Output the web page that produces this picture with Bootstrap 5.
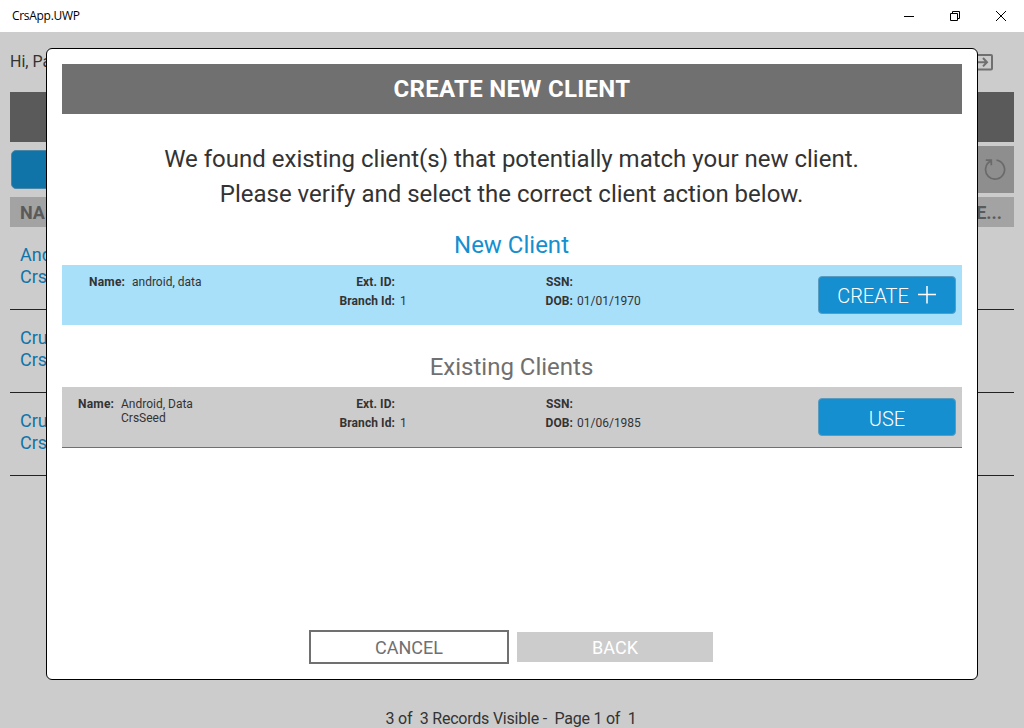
<!DOCTYPE html>
<html lang="en">
<head>
<meta charset="utf-8">
<title>CrsApp.UWP</title>
<link href="https://cdn.jsdelivr.net/npm/bootstrap@5.3.0/dist/css/bootstrap.min.css" rel="stylesheet">
<style>
body{font-family:Roboto,sans-serif;color:#333;background:#ccc;width:1024px;height:728px;overflow:hidden}
.titlebar{height:32px;font:12px/32px "Open Sans","Noto Sans",sans-serif;color:#000;padding-left:12px}
.titlebar span{letter-spacing:-.3px}
.caption-btn{width:46px;height:32px}
.app-page{height:696px;padding:0 10px}
.greeting{height:60px;font-size:16px;line-height:60px}
.signout{margin-right:21px}
.page-head{height:50px;background:#5a5a5a}
.toolbar-row{height:47px;margin:4px 0}
.add-btn{width:300px;height:39px;margin-left:1px;background:#1174a9;border:1px solid #4a86a8;border-radius:5px;margin-bottom:1px}
.refresh-btn{width:47px;background:#8e8e8e;padding:0 8px 1px 0}
.list-head{height:30px;background:#a3a3a3;color:#5a5a5a;font-size:18px;font-weight:700;line-height:31px;padding:0 12px 0 10px}
.list-row{height:83px;border-bottom:1px solid #222;color:#1174a9;font-size:18px;line-height:22px;padding:17px 10px 0}
.page-status{font-size:16px;line-height:18px;letter-spacing:-.22px;white-space:pre;padding-right:2px}
.dialog-box{left:46px;top:48px;width:932px;height:632px;background:#fff;border:1px solid #000;border-radius:6px;padding:15px}
.dialog-title{height:50px;background:#707070;font-size:24px;font-weight:700;line-height:50px;letter-spacing:.3px;margin:0}
.intro{font-size:24px;line-height:35px;margin:28px 1px 0 0}
.sect{font-size:24px;font-weight:400;line-height:34px;margin:0;padding:0 1px 3px 0}
.new-title{color:#158fd0;margin-top:16px}
.old-title{color:#707070;margin-top:25px}
.client-row{display:grid;grid-template-columns:272px 61px 140px 38px 245px 138px;height:60px;font-size:12px;line-height:19px;padding:8px 0 0}
.client-row b{font-weight:700;letter-spacing:.08px}
.who{line-height:14px;padding-top:2px}
.who b{width:36px;letter-spacing:.2px}
.new-row .who{padding-left:27px}
.old-row .who{padding-left:16px}
.who span{padding-left:7px}
.fval{padding-left:5px}
.dob{padding-left:4px}
.act{height:38px;margin-top:3px;background:#158fd0;border:1px solid #5a9cc0;border-radius:4px;font-size:20px;font-weight:300;line-height:38px;padding:1px 0 0;color:#fff}
.new-row{background:#a8dff9}
.old-row{background:#ccc;border-bottom:1px solid #707070;height:61px}
.foot-btn{border-radius:0;padding:0;font-size:18px}
.cancel{width:200px;height:34px;border:2px solid #707070;color:#707070}
.back{width:196px;height:30px;background:#ccc;color:#fff;border:0}
.foot-row{padding-right:2px}
</style>
</head>
<body class="position-relative">
<header class="titlebar bg-white d-flex justify-content-between">
  <span>CrsApp.UWP</span>
  <div class="d-flex">
    <svg class="caption-btn" viewBox="0 0 46 32"><path d="M18 16.5h10" stroke="#000"/></svg>
    <svg class="caption-btn" viewBox="0 0 46 32" fill="none" stroke="#000"><path d="M18.5 13.5h7v7h-7zM20.5 13.500v-2h7v7h-2"/></svg>
    <svg class="caption-btn" viewBox="0 0 46 32"><path d="M18 11l10 10M28 11L18 21" stroke="#000"/></svg>
  </div>
</header>
<main class="app-page d-flex flex-column">
  <div class="greeting d-flex justify-content-between align-items-center">
    <span>Hi, Pa</span>
    <svg class="signout" width="20" height="18" viewBox="0 0 20 18" fill="none" stroke="#707070" stroke-width="2"><path d="M1 5V2h17q1 0 1 1v12.500q0 1-1 1H1v-3M0 9.200h14M10 5l4 4.200-4 4.200"/></svg>
  </div>
  <div class="page-head"></div>
  <div class="toolbar-row d-flex justify-content-between">
    <div class="add-btn align-self-center"></div>
    <div class="refresh-btn d-flex align-items-center justify-content-end">
      <svg width="23" height="23" viewBox="0 0 23 23" fill="none" stroke="#6a6a6a" stroke-width="1.700"><path d="M13.500 2.200A9.500 9.500 0 1 1 7.800 3.100M2.800 2.200h5.500v5"/></svg>
    </div>
  </div>
  <div class="list-head d-flex justify-content-between"><span>NA</span><span>E...</span></div>
  <div class="list-row">And<br>Crs</div>
  <div class="list-row">Cru<br>Crs</div>
  <div class="list-row">Cru<br>Crs</div>
  <div class="page-status mt-auto text-center">3 of  3 Records Visible -  Page 1 of  1</div>
</main>

<section class="dialog-box position-absolute d-flex flex-column" role="dialog">
  <h1 class="dialog-title text-white text-center">CREATE NEW CLIENT</h1>
  <p class="intro text-center">We found existing client(s) that potentially match your new client.<br>Please verify and select the correct client action below.</p>
  <h2 class="sect new-title text-center">New Client</h2>
  <div class="client-row new-row">
    <div class="who d-flex"><b>Name:</b><span>android, data</span></div>
    <div class="text-end"><b>Ext. ID:</b><br><b>Branch Id:</b></div>
    <div class="fval"><br>1</div>
    <div class="text-end"><b>SSN:</b><br><b>DOB:</b></div>
    <div class="dob"><br>01/01/1970</div>
    <button class="btn act d-flex align-items-center justify-content-center gap-2">CREATE
      <svg width="20" height="20" viewBox="0 0 20 20" stroke="#fff" stroke-width="1.500"><path d="M1 8.500h18M10-.5v18"/></svg></button>
  </div>
  <h2 class="sect old-title text-center">Existing Clients</h2>
  <div class="client-row old-row">
    <div class="who d-flex"><b>Name:</b><span>Android, Data<br>CrsSeed</span></div>
    <div class="text-end"><b>Ext. ID:</b><br><b>Branch Id:</b></div>
    <div class="fval"><br>1</div>
    <div class="text-end"><b>SSN:</b><br><b>DOB:</b></div>
    <div class="dob"><br>01/06/1985</div>
    <button class="btn act">USE</button>
  </div>
  <div class="foot-row mt-auto d-flex justify-content-center align-items-center gap-2">
    <button class="btn foot-btn cancel">CANCEL</button>
    <button class="btn foot-btn back">BACK</button>
  </div>
</section>
<script src="https://cdn.jsdelivr.net/npm/bootstrap@5.3.0/dist/js/bootstrap.bundle.min.js"></script>
</body>
</html>
